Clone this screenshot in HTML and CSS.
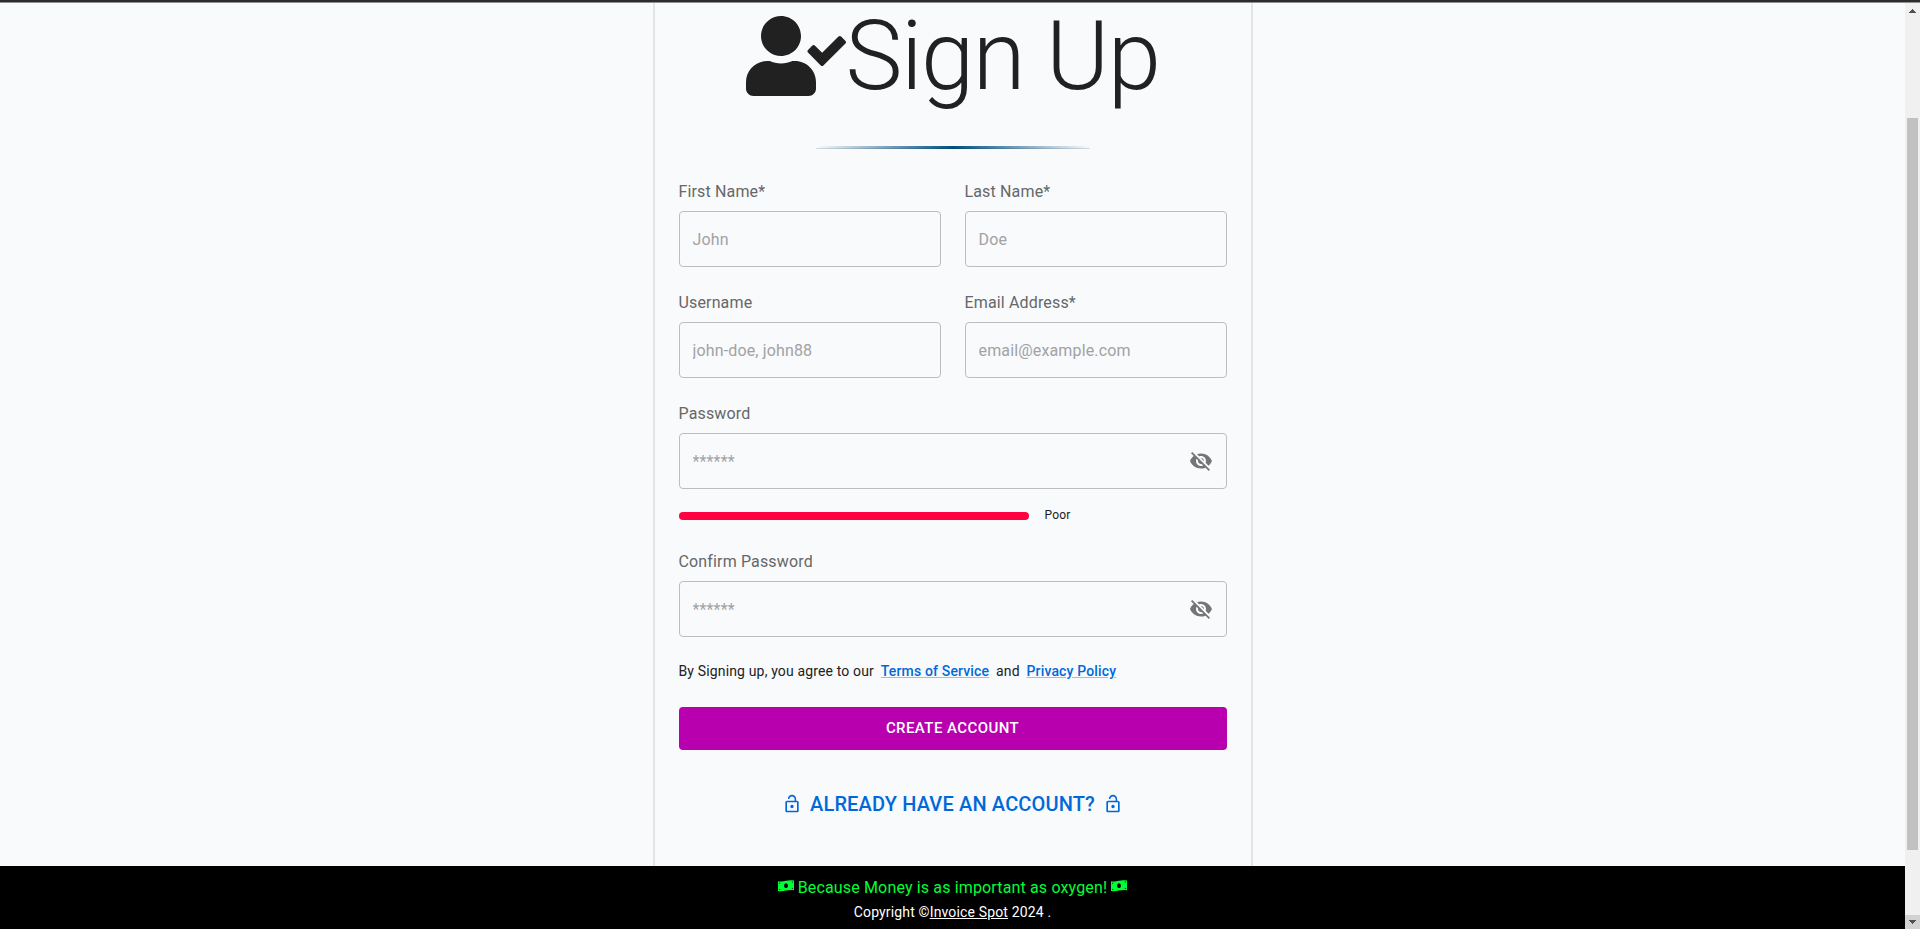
FILE: index.html
```html
<!DOCTYPE html>
<html lang="en">
<head>
<meta charset="utf-8">
<title>Sign Up</title>
<link rel="stylesheet" href="styles.css">
</head>
<body>
<svg class="defs" width="0" height="0">
  <symbol id="eye-off" viewBox="0 0 24 24"><path d="M12 7c2.76 0 5 2.24 5 5 0 .65-.13 1.26-.36 1.83l2.92 2.92c1.51-1.26 2.7-2.89 3.43-4.75-1.73-4.39-6-7.5-11-7.5-1.4 0-2.74.25-3.98.7l2.16 2.16C10.74 7.13 11.35 7 12 7zM2 4.27l2.28 2.28.46.46C3.08 8.3 1.78 10.02 1 12c1.73 4.39 6 7.5 11 7.5 1.55 0 3.03-.3 4.38-.84l.42.42L19.73 22 21 20.73 3.27 3 2 4.27zM7.53 9.8l1.55 1.55c-.05.21-.08.43-.08.65 0 1.66 1.34 3 3 3 .22 0 .44-.03.65-.08l1.55 1.55c-.67.33-1.41.53-2.2.53-2.76 0-5-2.24-5-5 0-.79.2-1.53.53-2.2zm4.31-.78l3.15 3.15.02-.16c0-1.66-1.34-3-3-3l-.17.01z"/></symbol>
  <symbol id="lock-open" viewBox="0 0 24 24"><path d="M12 17c1.1 0 2-.9 2-2s-.9-2-2-2-2 .9-2 2 .9 2 2 2zm6-9h-1V6c0-2.76-2.24-5-5-5S7 3.24 7 6h1.9c0-1.71 1.39-3.1 3.1-3.1 1.71 0 3.1 1.39 3.1 3.1v2H6c-1.1 0-2 .9-2 2v10c0 1.1.9 2 2 2h12c1.100 0 2-.9 2-2V10c0-1.100-.9-2-2-2zm0 12H6V10h12v10z"/></symbol>
  <symbol id="money" viewBox="0 0 16 12"><path fill-rule="evenodd" d="M0 1.200C3 2 5 1.300 8 .7S13 0 16 .6V10.300C13 9.600 11 10 8 10.600S3 11.700 0 10.900ZM8 3.300C6.900 3.300 6.100 4.500 6.100 5.700S6.900 8.100 8 8.100 9.900 7 9.900 5.700 9.100 3.300 8 3.300ZM1.200 2.700V3.900Q2.200 3.800 2.400 2.800ZM1.200 8.900V10.100H2.500Q2.300 9 1.200 8.900ZM14.800 1.500H13.500Q13.700 2.600 14.800 2.700ZM14.800 7.700Q13.800 7.900 13.600 8.900L14.800 9Z"/></symbol>
</svg>
<div class="topbar"></div>
<div class="window">
  <div class="page">
    <main class="card">
      <h1 class="title">
        <svg class="title-icon" viewBox="0 0 640 512"><path d="M224 256c70.700 0 128-57.300 128-128S294.700 0 224 0 96 57.300 96 128s57.300 128 128 128zm89.600 32h-16.700c-22.200 10.200-46.900 16-72.900 16s-50.600-5.800-72.900-16h-16.700C60.200 288 0 348.200 0 422.400V464c0 26.500 21.500 48 48 48h352c26.500 0 48-21.500 48-48v-41.600c0-74.200-60.200-134.400-134.400-134.400zm323-128.400l-27.800-28.100c-4.600-4.700-12.100-4.700-16.800-.1l-104.800 104-45.500-45.800c-4.600-4.700-12.100-4.700-16.800-.1l-28.100 27.900c-4.700 4.600-4.700 12.100-.1 16.800l81.700 82.300c4.600 4.700 12.100 4.700 16.800.1l141.300-140.200c4.600-4.700 4.700-12.200.1-16.800z"/></svg><span>Sign Up</span>
      </h1>
      <hr class="rule">
      <form class="form">
        <div class="field"><label class="label">First Name*</label><div class="box"><input class="input" placeholder="John"></div></div>
        <div class="field"><label class="label">Last Name*</label><div class="box"><input class="input" placeholder="Doe"></div></div>
        <div class="field"><label class="label">Username</label><div class="box"><input class="input" placeholder="john-doe, john88"></div></div>
        <div class="field"><label class="label">Email Address*</label><div class="box"><input class="input" placeholder="email@example.com"></div></div>
        <div class="field wide"><label class="label">Password</label><div class="box"><input class="input" type="password" placeholder="******"><svg class="eye"><use href="#eye-off"/></svg></div>
          <div class="strength"><div class="meter"></div><span>Poor</span></div>
        </div>
        <div class="field wide"><label class="label">Confirm Password</label><div class="box"><input class="input" type="password" placeholder="******"><svg class="eye"><use href="#eye-off"/></svg></div></div>
      </form>
      <p class="terms">By Signing up, you agree to our <a class="link" href="#">Terms of Service</a> and <a class="link" href="#">Privacy Policy</a></p>
      <button class="submit" type="button">CREATE ACCOUNT</button>
      <a class="login"><svg class="lock"><use href="#lock-open"/></svg><span>ALREADY HAVE AN ACCOUNT?</span><svg class="lock"><use href="#lock-open"/></svg></a>
    </main>
    <footer class="footer">
      <div class="slogan"><svg class="money"><use href="#money"/></svg><span>Because Money is as important as oxygen!</span><svg class="money"><use href="#money"/></svg></div>
      <div class="copyright">Copyright ©<a class="brand">Invoice Spot</a> 2024 .</div>
    </footer>
  </div>
  <div class="scrollbar">
    <svg class="arrow" viewBox="0 0 15 14"><path d="M4 10V9H5V8H6V7H7V6H8V7H9V8H10V9H11V10Z"/></svg>
    <div class="thumb"></div>
    <svg class="arrow down" viewBox="0 0 15 14"><path d="M4 5H11V6H10V7H9V8H8V9H7V8H6V7H5V6H4Z"/></svg>
  </div>
</div>
</body>
</html>
```

FILE: styles.css
```css
* { box-sizing: border-box; }
body { margin: 0; height: 929px; overflow: hidden; display: flex; flex-direction: column; background: #f8fafc; color: #212121; font-family: Roboto, sans-serif; }
.defs { display: none; }
.topbar { height: 3px; flex: none; background: #2d2b2b; border-bottom: 1px solid #908f8f; }
.window { flex: 1; display: flex; }
.page { flex: 1; display: flex; flex-direction: column; }
.card { width: 600px; height: 863px; margin: 0 auto; padding: 0 24px; border: 2px solid #e2e4e6; border-width: 0 2px; display: flex; flex-direction: column; }
.title { margin: 0; height: 113px; padding-bottom: 8px; display: flex; align-items: center; justify-content: center; font-size: 96px; font-weight: 300; line-height: 112px; letter-spacing: -1.5px; }
.title-icon { width: 100px; height: 100px; flex: none; fill: currentColor; margin-top: 1px; }
.rule { width: 274px; height: 3px; margin: 30px auto 31px; border: 0; border-bottom: 1px solid rgba(0,0,0,.12); background: linear-gradient(to right, transparent, #005082, transparent) border-box; }
.form { display: grid; grid-template-columns: 1fr 1fr; gap: 24px; }
.wide { grid-column: 1 / -1; }
.label { display: block; height: 31px; line-height: 23px; font-size: 16px; letter-spacing: .15px; color: #666768; }
.box { height: 56px; display: flex; align-items: center; padding: 0 13px; border: 1px solid #bcbdbe; border-radius: 4px; }
.input { flex: 1; min-width: 0; padding: 0; border: 0; outline: 0; background: none; font: 16px Roboto, sans-serif; letter-spacing: .15px; }
.input::placeholder { color: #a1a2a4; opacity: 1; }
.eye { width: 24px; height: 24px; fill: #757575; }
.strength { height: 37px; padding-top: 14px; display: flex; align-items: center; gap: 16px; font-size: 12px; letter-spacing: .15px; }
.meter { width: 350px; height: 8px; margin-top: 3px; border-radius: 4px; background: #ff0040; }
.terms { margin: 24px 0 25px; height: 21px; line-height: 20px; font-size: 14px; letter-spacing: .15px; }
.link { margin: 0 3.2px; color: #0069d9; font-weight: 500; text-decoration: underline; text-decoration-color: rgba(0,105,217,.4); }
.submit { height: 43px; padding: 0 0 2px; border: 0; border-radius: 4px; background: #b900ae; color: #fff; font: 500 15px Roboto, sans-serif; letter-spacing: .43px; }
.login { margin-top: 38px; height: 32px; display: flex; align-items: center; justify-content: center; gap: 8px; color: #0069d9; font-size: 20px; font-weight: 500; letter-spacing: .15px; }
.lock { width: 20px; height: 20px; fill: currentColor; }
.footer { height: 63px; padding-top: 9px; background: #000; color: #fff; text-align: center; }
.slogan { height: 24px; display: flex; align-items: center; justify-content: center; gap: 4px; color: #00ff37; font-size: 16px; letter-spacing: .15px; }
.money { width: 16px; height: 12px; fill: currentColor; margin-bottom: 3px; }
.copyright { height: 26px; line-height: 26px; font-size: 14px; letter-spacing: .15px; }
.brand { text-decoration: underline; }
.scrollbar { width: 15px; display: flex; flex-direction: column; background: #f0f0f0; }
.arrow { width: 15px; height: 14px; fill: #505050; }
.thumb { width: 11px; height: 732px; margin: 101px auto 65px 2px; background: #c1c1c1; }
.down { background: #d2d2d2; }
```
